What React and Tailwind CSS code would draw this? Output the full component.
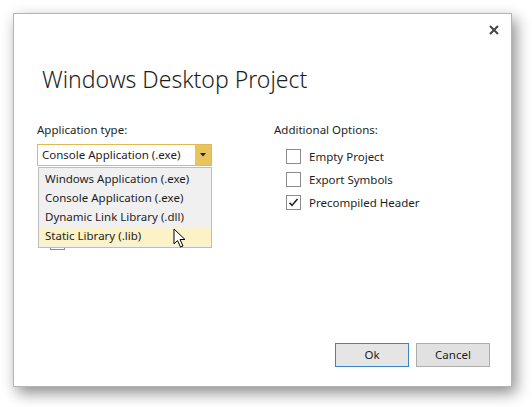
import React from "react";

const font = { fontFamily: '"Segoe UI", "Noto Sans", "Open Sans", sans-serif' };

function Checkbox({ checked, label }) {
  return (
    <div className="flex items-center h-[23px]">
      <div className="w-[15px] h-[15px] border border-[#8a8a8a] bg-white flex items-center justify-center">
        {checked && (
          <svg width="11" height="11" viewBox="0 0 11 11">
            <path d="M1.5 5.8 L4 8.4 L9.5 2" fill="none" stroke="#222" strokeWidth="1.6" />
          </svg>
        )}
      </div>
      <span className="ml-[8px] text-[11.5px] text-[#1e1e1e]">{label}</span>
    </div>
  );
}

export default function App() {
  return (
    <div className="w-[532px] h-[407px] bg-white p-[13px] overflow-hidden" style={font}>
      <div className="relative w-[499px] h-[374px] bg-white border border-[#b4b4b4] shadow-[4px_6px_14px_rgba(0,0,0,0.45)] flex flex-col">
        <div className="flex justify-end pr-[12px] pt-[9px] h-[32px]">
          <svg width="10" height="10" viewBox="0 0 10 10" className="mt-[2px]">
            <path d="M1 1 L9 9 M9 1 L1 9" stroke="#444" strokeWidth="2" />
          </svg>
        </div>
        <div className="pl-[28px] mt-[17px] text-[23px] font-light text-[#1e1e1e] leading-[32px]">
          Windows Desktop Project
        </div>
        <div className="flex mt-[27px] pl-[23px]">
          <div className="w-[237px] relative">
            <div className="text-[11.5px] text-[#1e1e1e] leading-[16px]">Application type:</div>
            <div className="mt-[6px] w-[175px] h-[22px] border border-[#e1bb52] bg-white flex items-center">
              <span className="flex-1 pl-[4px] text-[11.5px] text-[#1e1e1e]">Console Application (.exe)</span>
              <div className="w-[16px] h-full bg-[#e9c35e] flex items-center justify-center">
                <svg width="6" height="4" viewBox="0 0 6 4"><path d="M0 0 H6 L3 3.5 Z" fill="#222" /></svg>
              </div>
            </div>
            <div className="mt-[69px] ml-[13px] w-[15px] h-[15px] border border-[#8a8a8a] bg-white" />
            <div className="absolute left-[1px] top-[45px] w-[174px] bg-[#f0f0f0] border border-[#bdbdbd] pt-[1px] pb-[1px] text-[11.5px] text-[#1e1e1e]">
              <div className="h-[19px] pl-[6px] flex items-center">Windows Application (.exe)</div>
              <div className="h-[19px] pl-[6px] flex items-center">Console Application (.exe)</div>
              <div className="h-[19.5px] pl-[6px] flex items-center">Dynamic Link Library (.dll)</div>
              <div className="h-[19px] pl-[6px] flex items-center bg-[#fcf2c8]">Static Library (.lib)</div>
            </div>
            <svg className="absolute left-[136px] top-[106px]" width="14" height="21" viewBox="0 0 14 21">
              <path d="M1 1 L1 16 L4.5 12.5 L7.5 19 L10 18 L7 11.5 L12 11.5 Z" fill="#fff" stroke="#000" strokeWidth="1" strokeLinejoin="round" />
            </svg>
          </div>
          <div>
            <div className="text-[11.5px] text-[#1e1e1e] leading-[16px]">Additional Options:</div>
            <div className="mt-[7px] pl-[12px]">
              <Checkbox label="Empty Project" />
              <Checkbox label="Export Symbols" />
              <Checkbox checked label="Precompiled Header" />
            </div>
          </div>
        </div>
        <div className="flex-1" />
        <div className="flex justify-end gap-[7px] pr-[21px] pb-[19px]">
          <button className="w-[74px] h-[24px] border border-[#3b84c7] bg-[#e5e5e5] text-[11.5px] text-[#1e1e1e]">Ok</button>
          <button className="w-[74px] h-[24px] border border-[#adadad] bg-[#e1e1e1] text-[11.5px] text-[#1e1e1e]">Cancel</button>
        </div>
      </div>
    </div>
  );
}
